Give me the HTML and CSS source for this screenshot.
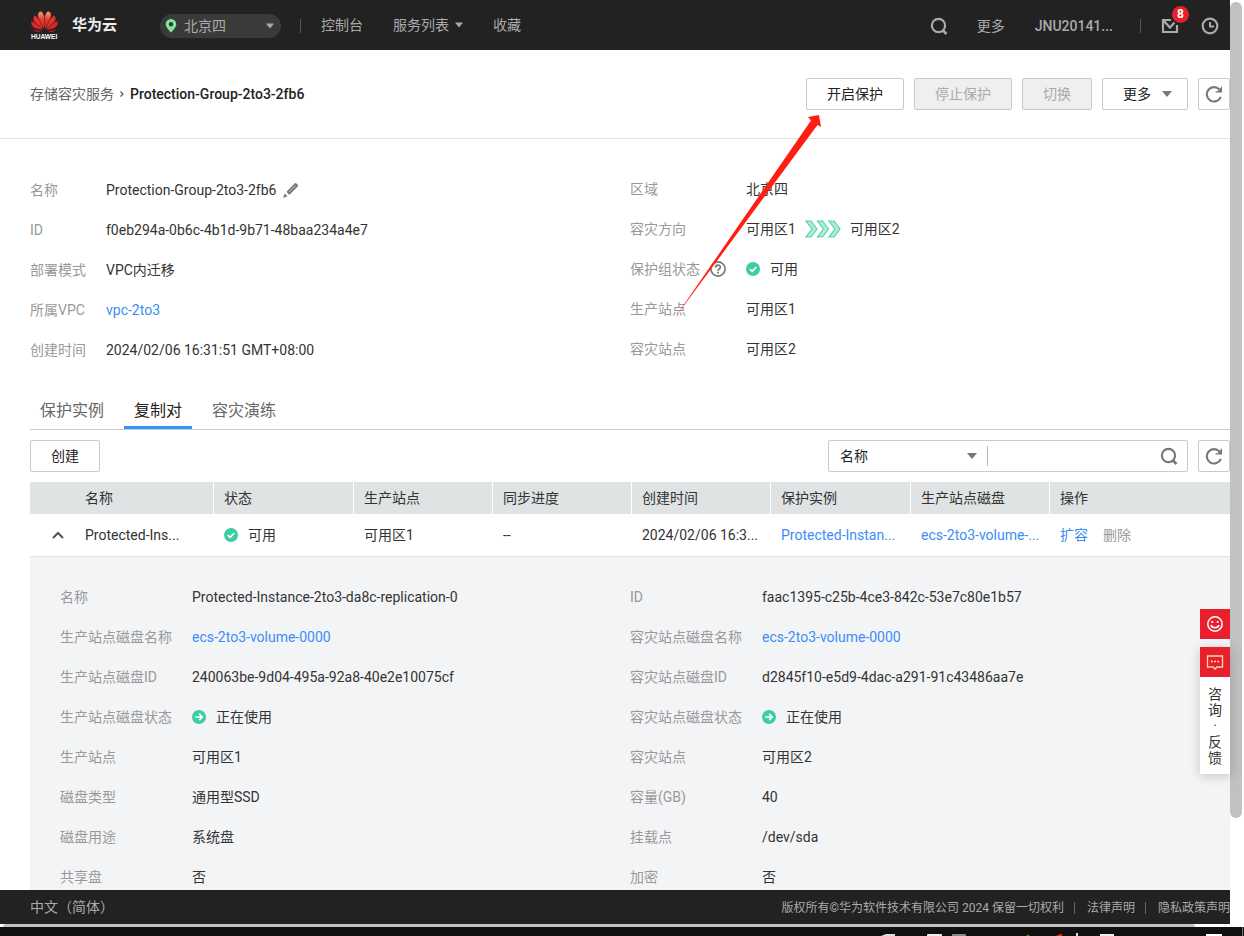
FILE: index.html
```html
<!DOCTYPE html>
<html lang="zh-CN">
<head>
<meta charset="utf-8">
<title>存储容灾服务</title>
<link rel="stylesheet" href="styles.css">
</head>
<body>
<svg class="defs" width="0" height="0" aria-hidden="true">
  <symbol id="caret" viewBox="0 0 10 6"><path d="M0 0h10L5 6z" fill="currentColor"/></symbol>
  <symbol id="search" viewBox="0 0 18 18"><circle cx="8.500" cy="8.500" r="6.600" fill="none" stroke="currentColor" stroke-width="2.200"/><path d="M12.500 13L16.500 17" fill="none" stroke="currentColor" stroke-width="2.600"/></symbol>
  <symbol id="refresh" viewBox="0 0 18 18"><path d="M14.500 4.600A7.200 7.200 0 1 0 15.800 11.800" fill="none" stroke="currentColor" stroke-width="2.100"/><path d="M17 1v6.600h-6.400V6.200h2.200z" fill="currentColor"/></symbol>
  <symbol id="ok" viewBox="0 0 14 14"><circle cx="7" cy="7" r="7" fill="#3dcca6"/><path d="M3.800 7.100L6.200 9.400L10.400 5" fill="none" stroke="#fff" stroke-width="1.600"/></symbol>
  <symbol id="run" viewBox="0 0 14 14"><circle cx="7" cy="7" r="7" fill="#3dcca6"/><path d="M3.200 7H10M7.200 3.900L10.300 7L7.200 10.100" fill="none" stroke="#fff" stroke-width="1.500"/></symbol>
</svg>
<div class="viewport">
  <div class="page">
    <header class="topbar">
      <a class="brand" href="#">
        <svg class="logo" viewBox="92 30 84 87" role="img" aria-label="HUAWEI">
          <defs>
            <linearGradient id="petal" x1="0" y1="0" x2="0" y2="1"><stop offset="0" stop-color="#f5a07a"/><stop offset=".45" stop-color="#e8402f"/><stop offset="1" stop-color="#d91a1f"/></linearGradient>
            <g id="half" stroke="#222" stroke-width="1.500">
              <path d="M136 86C130 66 132 44 142 34C152 33 156 42 152 53C149 65 142 78 136 86z" fill="url(#petal)"/>
              <path d="M138 87C143 66 151 52 162 45C169 51 168 60 161 67C153 76 146 82 138 87z" fill="#e3302a"/>
              <path d="M139 88C150 75 160 66 172 61C175 71 171 79 161 83C153 86 146 88 139 88z" fill="#de2526"/>
              <path d="M140 90C150 90 160 88 168 86C164 93 155 96 148 93z" fill="#d91a1f"/>
            </g>
          </defs>
          <use href="#half"/>
          <use href="#half" transform="matrix(-1 0 0 1 268 0)"/>
          <text class="logo-text" x="95" y="113">HUAWEI</text>
        </svg>
        <span>华为云</span>
      </a>
      <div class="region">
        <svg class="pin" viewBox="0 0 12 14"><path d="M6 0a5.300 5.300 0 0 0-5.300 5.300C.7 8.600 6 13.500 6 13.500S11.300 8.600 11.300 5.300A5.300 5.300 0 0 0 6 0zM6 3a2.300 2.300 0 1 1 0 4.600A2.300 2.300 0 0 1 6 3z" fill="#7fe899"/></svg>
        <select class="region-select" aria-label="区域"><option>北京四</option></select>
        <svg class="caret caret-pill"><use href="#caret"/></svg>
      </div>
      <i class="rule"></i>
      <nav class="nav">
        <a href="#">控制台</a>
        <a href="#">服务列表<svg class="caret caret-nav"><use href="#caret"/></svg></a>
        <a href="#">收藏</a>
      </nav>
      <div class="account">
        <button class="plain" aria-label="搜索"><svg class="icon18"><use href="#search"/></svg></button>
        <a href="#">更多</a>
        <a href="#" class="user">JNU20141...</a>
        <i class="rule short"></i>
        <button class="plain mail" aria-label="消息">
          <svg class="icon18" viewBox="0 0 18 18"><path d="M10 3H2V15H16V8" fill="none" stroke="#aaa" stroke-width="2.200"/><path d="M2 3L9 10.500L13.500 5.500" fill="none" stroke="#aaa" stroke-width="2.200"/></svg>
          <span class="badge">8</span>
        </button>
        <button class="plain" aria-label="历史"><svg class="icon18" viewBox="0 0 18 18"><circle cx="9" cy="9" r="7.300" fill="none" stroke="#aaa" stroke-width="2.200"/><path d="M9 5V9.500H13" fill="none" stroke="#aaa" stroke-width="2"/></svg></button>
      </div>
    </header>

    <main class="main">
      <div class="heading">
        <nav class="crumbs"><a href="#">存储容灾服务</a><svg class="crumb-sep" viewBox="0 0 6 8"><path d="M1.500 1.500L4 4L1.500 6.500" fill="none" stroke="#555" stroke-width="1.200"/></svg><h1>Protection-Group-2to3-2fb6</h1></nav>
        <div class="actions">
          <button class="btn">开启保护</button>
          <button class="btn" disabled>停止保护</button>
          <button class="btn" disabled>切换</button>
          <button class="btn">更多<svg class="caret caret-btn"><use href="#caret"/></svg></button>
          <button class="btn square" aria-label="刷新"><svg class="icon18"><use href="#refresh"/></svg></button>
        </div>
      </div>

      <section class="details">
        <dl class="facts summary-left">
          <dt>名称</dt><dd>Protection-Group-2to3-2fb6<button class="plain edit" aria-label="编辑"><svg class="icon16" viewBox="0 0 16 16"><path d="M4.700 9.800L12.500 2L14.200 3.700L6.400 11.500z" fill="none" stroke="#777" stroke-width="1.900" stroke-linejoin="round"/><path d="M0 16L1.800 11.500L4.500 14.200z" fill="#777"/></svg></button></dd>
          <dt>ID</dt><dd>f0eb294a-0b6c-4b1d-9b71-48baa234a4e7</dd>
          <dt>部署模式</dt><dd>VPC内迁移</dd>
          <dt>所属VPC</dt><dd><a href="#">vpc-2to3</a></dd>
          <dt>创建时间</dt><dd>2024/02/06 16:31:51 GMT+08:00</dd>
        </dl>
        <dl class="facts summary-right">
          <dt>区域</dt><dd>北京四</dd>
          <dt>容灾方向</dt><dd>可用区1<svg class="flow" viewBox="0 0 36 18"><g fill="#b5eadc" stroke="#50d4ab" stroke-width="1.200"><path d="M1 1H6L12 9L6 17H1L7 9z"/><path d="M12.500 1H17.500L23.500 9L17.500 17H12.500L18.500 9z"/><path d="M24 1H29L35 9L29 17H24L30 9z"/></g></svg>可用区2</dd>
          <dt>保护组状态<svg class="help" viewBox="0 0 16 16"><circle cx="8" cy="8" r="7.100" fill="none" stroke="#777" stroke-width="1.700"/><path d="M5.600 6.500C5.600 3.300 10.400 3.300 10.400 6.300C10.400 8 8 8 8 9.800M8 10.800V12.500" fill="none" stroke="#777" stroke-width="1.700"/></svg></dt><dd><svg class="status"><use href="#ok"/></svg>可用</dd>
          <dt>生产站点</dt><dd>可用区1</dd>
          <dt>容灾站点</dt><dd>可用区2</dd>
        </dl>
      </section>

      <section class="content">
        <div class="tabs" role="tablist">
          <button class="tab" role="tab">保护实例</button>
          <button class="tab active" role="tab" aria-selected="true">复制对</button>
          <button class="tab" role="tab">容灾演练</button>
        </div>
        <div class="toolbar">
          <button class="btn">创建</button>
          <div class="filters">
            <div class="searchbox">
              <div class="field"><select class="field-select" aria-label="搜索字段"><option>名称</option></select><svg class="caret caret-field"><use href="#caret"/></svg></div>
              <input class="query" type="text" aria-label="关键字">
              <button class="plain" aria-label="搜索"><svg class="icon18"><use href="#search"/></svg></button>
            </div>
            <button class="btn square" aria-label="刷新"><svg class="icon18"><use href="#refresh"/></svg></button>
          </div>
        </div>
        <table class="grid">
          <colgroup><col class="c-name"><col class="c-wide"><col class="c"><col class="c"><col class="c"><col class="c-wide"><col class="c"><col></colgroup>
          <thead><tr><th class="first">名称</th><th>状态</th><th>生产站点</th><th>同步进度</th><th>创建时间</th><th>保护实例</th><th>生产站点磁盘</th><th>操作</th></tr></thead>
          <tbody>
            <tr class="row">
              <td><div class="name"><button class="plain toggle" aria-label="收起"><svg class="fold" viewBox="0 0 12 8"><path d="M1 7L6 2L11 7" fill="none" stroke="#555" stroke-width="2"/></svg></button><span>Protected-Ins...</span></div></td>
              <td><div class="state"><svg class="status"><use href="#ok"/></svg>可用</div></td>
              <td>可用区1</td>
              <td>--</td>
              <td>2024/02/06 16:3...</td>
              <td><a href="#">Protected-Instan...</a></td>
              <td><a href="#">ecs-2to3-volume-...</a></td>
              <td><div class="ops"><a href="#">扩容</a><span class="off">删除</span></div></td>
            </tr>
            <tr>
              <td class="expanded" colspan="8">
                <div class="panel">
                  <dl class="facts">
                    <dt>名称</dt><dd>Protected-Instance-2to3-da8c-replication-0</dd>
                    <dt>生产站点磁盘名称</dt><dd><a href="#">ecs-2to3-volume-0000</a></dd>
                    <dt>生产站点磁盘ID</dt><dd>240063be-9d04-495a-92a8-40e2e10075cf</dd>
                    <dt>生产站点磁盘状态</dt><dd><svg class="status"><use href="#run"/></svg>正在使用</dd>
                    <dt>生产站点</dt><dd>可用区1</dd>
                    <dt>磁盘类型</dt><dd>通用型SSD</dd>
                    <dt>磁盘用途</dt><dd>系统盘</dd>
                    <dt>共享盘</dt><dd>否</dd>
                  </dl>
                  <dl class="facts">
                    <dt>ID</dt><dd>faac1395-c25b-4ce3-842c-53e7c80e1b57</dd>
                    <dt>容灾站点磁盘名称</dt><dd><a href="#">ecs-2to3-volume-0000</a></dd>
                    <dt>容灾站点磁盘ID</dt><dd>d2845f10-e5d9-4dac-a291-91c43486aa7e</dd>
                    <dt>容灾站点磁盘状态</dt><dd><svg class="status"><use href="#run"/></svg>正在使用</dd>
                    <dt>容灾站点</dt><dd>可用区2</dd>
                    <dt>容量(GB)</dt><dd>40</dd>
                    <dt>挂载点</dt><dd>/dev/sda</dd>
                    <dt>加密</dt><dd>否</dd>
                  </dl>
                </div>
              </td>
            </tr>
          </tbody>
        </table>
      </section>
    </main>

    <footer class="footer">
      <a href="#" class="lang">中文（简体）</a>
      <div class="legal"><span>版权所有©华为软件技术有限公司 2024 保留一切权利</span><i></i><a href="#">法律声明</a><i></i><a href="#">隐私政策声明</a></div>
    </footer>

    <aside class="floating">
      <button class="float-btn" aria-label="评价"><svg class="icon18" viewBox="0 0 18 18"><g fill="none" stroke="#fff" stroke-width="1.500"><circle cx="9" cy="9" r="7.200"/><path d="M5 10C6 13.500 12 13.500 13 10"/></g><circle cx="6.300" cy="7" r="1.100" fill="#fff"/><circle cx="11.700" cy="7" r="1.100" fill="#fff"/></svg></button>
      <div class="feedback">
        <button class="float-btn" aria-label="咨询"><svg class="icon18" viewBox="0 0 18 18"><path d="M1.500 3H16.500V14H11L9 16L7 14H1.500z" fill="none" stroke="#fbd9a0" stroke-width="1.300"/><path d="M5 8.500h1.600M8.200 8.500h1.600M11.400 8.500H13" stroke="#fff" stroke-width="1.500"/></svg></button>
        <span class="feedback-text">咨<br>询<br>·<br>反<br>馈</span>
      </div>
    </aside>
    <svg class="pointer" viewBox="0 0 150 206" aria-hidden="true"><path d="M2 204L139 5.500L136 2L147 0L149 12L145.500 10Z" fill="#ff1f12"/></svg>
  </div>
  <div class="vscroll"><div class="vthumb"></div></div>
</div>
<div class="hscroll"><div class="hthumb"></div></div>
<div class="taskbar">
  <svg class="tray" viewBox="0 0 364 9" aria-hidden="true"><path d="M1 9L6 7H15V9z" fill="#ddd"/><rect x="47" y="7" width="15" height="3" rx="1" fill="#eee"/><rect x="72" y="7" width="14" height="3" rx="1" fill="#888"/><path d="M146 9l2-1.500l2 1.500z" fill="#2f8a3c"/><path d="M176 9l4-2h2v2z" fill="#e0281c"/><path d="M196 6h2v3h-2z" fill="#ddd"/><path d="M220 7h14v2h-14z" fill="#eee"/><path d="M326 7h16v2h-16z" fill="#fff"/><path d="M362 0h1v9h-1z" fill="#777"/></svg>
</div>
</body>
</html>
```

FILE: styles.css
```css
* { box-sizing: border-box; }

body {
  margin: 0;
  height: 100vh;
  display: flex;
  flex-direction: column;
  overflow: hidden;
  background: #fff;
  color: #333;
  font: 14px/20px Roboto, "Noto Sans CJK SC", sans-serif;
}

a { color: #3d8df5; text-decoration: none; }
button, select, input { font: inherit; color: inherit; margin: 0; }
button { cursor: pointer; }
svg { flex: none; display: block; }
dl, dd, h1 { margin: 0; }

.defs { position: absolute; }
.plain { padding: 0; border: 0; background: none; display: flex; }
.icon18 { width: 18px; height: 18px; }
.icon16 { width: 16px; height: 16px; }
.caret { width: 10px; height: 6px; }

.viewport { flex: 1; min-height: 0; display: flex; }
.page { position: relative; flex: 1; min-width: 0; display: flex; flex-direction: column; }

/* top bar */
.topbar {
  flex: none;
  height: 50px;
  padding: 2px 11px 0 30px;
  display: flex;
  align-items: center;
  background: #222;
  color: #aaa;
}
.topbar a { color: #aaa; }
.topbar .brand { padding-bottom: 2px; display: flex; align-items: center; gap: 13px; color: #eee; font-size: 15px; font-weight: 700; }
.logo { width: 29px; height: 30px; }
.logo-text { font: 700 19px "Liberation Sans", sans-serif; fill: #fff; }
.region {
  margin-left: 43px;
  width: 121px;
  height: 24px;
  padding: 0 7px 0 5px;
  display: flex;
  align-items: center;
  border-radius: 12px;
  background: #3a3a3a;
}
.pin { width: 12px; height: 14px; }
.region-select { flex: 1; min-width: 0; padding: 0 0 0 7px; border: 0; background: none; appearance: none; }
.caret-pill, .caret-nav { width: 8px; height: 6px; }
.rule { width: 1px; height: 14px; margin: 0 20px 0 19px; background: #555; }
.nav { padding-bottom: 2px; display: flex; gap: 30px; }
.nav a { display: flex; align-items: center; gap: 6px; }
.account { margin-left: auto; display: flex; align-items: center; }
.account .user { margin-left: 30px; font-weight: 500; }
.account > a:first-of-type { margin-left: 29px; }
.account .short { margin: 0 20px 0 27px; }
.mail { position: relative; margin-right: 22px; }
.badge {
  position: absolute;
  left: 11px;
  top: -11px;
  width: 17px;
  height: 17px;
  border-radius: 50%;
  background: #e8202d;
  color: #fff;
  font-size: 12px;
  font-weight: 700;
  line-height: 17px;
  text-align: center;
}

/* heading */
.main { flex: 1; min-height: 0; overflow: hidden; }
.heading {
  padding: 28px 0 28px 30px;
  display: flex;
  align-items: center;
  justify-content: space-between;
  border-bottom: 1px solid #dfe1e2;
}
.crumbs { display: flex; align-items: center; }
.crumbs a { color: #666; }
.crumb-sep { width: 6px; height: 8px; margin: 0 5px; }
.crumbs h1 { font-size: 14px; line-height: 20px; font-weight: 500; color: #222; }
.actions { display: flex; gap: 10px; }
.btn {
  height: 32px;
  padding: 0 20px;
  display: flex;
  align-items: center;
  justify-content: center;
  border: 1px solid #c8cacb;
  border-radius: 2px;
  background: #fff;
  color: #222;
}
.btn:disabled { background: #efefef; color: #aaa; }
.square { width: 32px; padding: 0; color: #777; }
.caret-btn { margin: 0 -5px 0 11px; color: #777; }

/* key/value lists */
.details { padding: 30px 0 0 30px; display: grid; grid-template-columns: 1fr 1fr; }
.facts { display: grid; grid-template-columns: 132px 1fr; grid-auto-rows: 40px; align-items: center; align-content: start; }
.facts dt { color: #999; display: flex; align-items: center; }
.facts dd { display: flex; align-items: center; }
.summary-left { grid-template-columns: 76px 1fr; padding-top: 1px; }
.summary-right { grid-template-columns: 116px 1fr; }
.edit { margin-left: 7px; }
.flow { width: 36px; height: 18px; margin: 0 9px; }
.help { width: 16px; height: 16px; margin-left: 10px; }
.status { width: 14px; height: 14px; margin-right: 10px; }

/* tabs and toolbar */
.content { padding: 19px 0 0 30px; }
.tabs { display: flex; gap: 10px; border-bottom: 1px solid #c8cacb; }
.tab {
  height: 40px;
  padding: 6px 10px 0;
  border: 0;
  border-bottom: 3px solid transparent;
  background: none;
  color: #666;
  font-size: 16px;
}
.tab.active { border-color: #2e96ff; color: #222; }
.toolbar { padding: 10px 0; display: flex; justify-content: space-between; }
.filters { display: flex; gap: 10px; }
.searchbox {
  width: 360px;
  height: 32px;
  padding-right: 9px;
  display: flex;
  align-items: center;
  border: 1px solid #c8cacb;
  border-radius: 2px;
  color: #777;
}
.field { width: 159px; padding: 0 10px 0 11px; display: flex; align-items: center; border-right: 1px solid #bbb; }
.field-select { flex: 1; padding: 0; border: 0; background: none; appearance: none; color: #222; }
.query { flex: 1; min-width: 0; height: 30px; border: 0; background: none; outline: 0; }

/* table */
.grid { width: 100%; table-layout: fixed; border-collapse: separate; border-spacing: 0; }
.c-name { width: 184px; }
.c-wide { width: 140px; }
.c { width: 139px; }
.grid th { height: 32px; padding: 0 10px; background: #dfe3e4; border-right: 1px solid #fff; font-weight: 400; text-align: left; }
.grid th:last-child { border-right: 0; }
.grid th.first { padding-left: 55px; }
.row td { height: 43px; padding: 0 10px; border-bottom: 1px solid #dfe1e2; white-space: nowrap; }
.row td:first-child { padding: 0; }
.name, .state, .ops { display: flex; align-items: center; }
.toggle { width: 55px; justify-content: center; }
.fold { width: 12px; height: 8px; }
.ops { gap: 15px; }
.off { color: #999; }
.expanded { padding: 0; }
.panel { padding: 20px 30px; display: grid; grid-template-columns: 1fr 1fr; background: #f3f4f6; }

/* footer */
.footer {
  flex: none;
  height: 34px;
  padding-left: 30px;
  display: flex;
  align-items: center;
  justify-content: space-between;
  background: #222;
  color: #aaa;
}
.footer a { color: #aaa; }
.legal { padding-top: 2px; display: flex; align-items: center; font-size: 12px; white-space: nowrap; }
.legal i { width: 1px; height: 12px; margin: 0 12px 0 10px; background: #666; }

/* floating help */
.floating { position: absolute; right: 0; bottom: 150px; width: 30px; display: flex; flex-direction: column; gap: 8px; }
.float-btn { width: 30px; height: 30px; padding: 0; border: 0; display: flex; align-items: center; justify-content: center; background: #e8202d; }
.feedback { background: #fff; box-shadow: 0 2px 12px rgba(0, 0, 0, .2); }
.feedback-text { display: block; padding: 9px 0 8px; line-height: 16px; text-align: center; }

.pointer { position: absolute; left: 672px; top: 115px; width: 150px; height: 206px; pointer-events: none; }

/* scroll bars and system bar */
.vscroll { width: 14px; padding: 2px 2px 0 0; background: #fff; }
.vthumb { height: 816px; border-radius: 6px; background: #c1c1c1; }
.hscroll { flex: none; height: 3px; padding: 0 49px 0 3px; background: #fff; }
.hthumb { height: 3px; border-radius: 3px 3px 0 0; background: #c1c1c1; }
.taskbar { flex: none; height: 9px; display: flex; justify-content: flex-end; background: #101010; }
.tray { width: 364px; height: 9px; }
```
